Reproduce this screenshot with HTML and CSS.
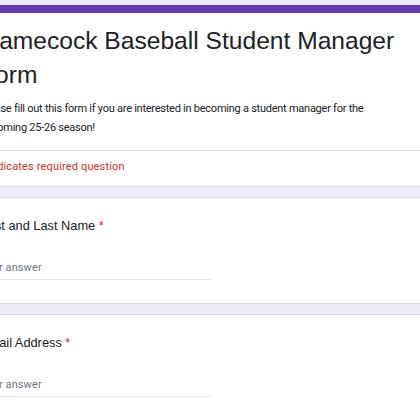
FILE: index.html
```html
<!DOCTYPE html>
<html>
<head>
<meta charset="utf-8">
<link rel="stylesheet" href="styles.css">
</head>
<body>
<div class="page">
  <div class="card header-card">
    <div class="header-main">
      <h1 class="form-title">Gamecock Baseball Student Manager Form</h1>
      <p class="form-desc">Please fill out this form if you are interested in becoming a student manager for the upcoming 25-26 season!</p>
    </div>
    <div class="required-note">* Indicates required question</div>
  </div>
  <div class="card question">
    <div class="q-title">First and Last Name <span class="star">*</span></div>
    <div class="answer">Your answer</div>
  </div>
  <div class="card question">
    <div class="q-title">Email Address <span class="star">*</span></div>
    <div class="answer">Your answer</div>
  </div>
</div>
</body>
</html>
```

FILE: styles.css
```css
html, body {
  margin: 0;
  padding: 0;
  background: #f0ebf8;
  overflow: hidden;
  width: 420px;
  height: 420px;
}
.page {
  margin-left: -45px;
  width: 520px;
  padding-top: 5px;
  display: flex;
  flex-direction: column;
  gap: 10px;
}
.card {
  background: #fff;
  border: 1px solid #dadce0;
  border-radius: 8px;
}
.header-card {
  border-top: 8px solid #673ab7;
  display: flex;
  flex-direction: column;
}
.header-main {
  padding: 11px 24px 13px 24px;
  border-bottom: 1px solid #dadce0;
}
.form-title {
  margin: 0;
  font-family: "Liberation Sans", Arial, sans-serif;
  font-weight: 400;
  font-size: 24.6px;
  line-height: 34px;
  color: #202124;
  width: 440px;
}
.form-desc {
  margin: 7px 0 0 0;
  font-family: Roboto, "Liberation Sans", sans-serif;
  font-size: 11px;
  line-height: 19px;
  letter-spacing: -0.25px;
  color: #202124;
  width: 420px;
}
.required-note {
  padding: 8px 24px 11px 24px;
  font-family: Roboto, "Liberation Sans", sans-serif;
  font-size: 11px;
  line-height: 16px;
  letter-spacing: 0.15px;
  color: #d93025;
}
.question {
  padding: 18px 24px 23px 24px;
  display: flex;
  flex-direction: column;
  gap: 24px;
}
.q-title {
  font-family: "Liberation Sans", Arial, sans-serif;
  font-size: 12.8px;
  line-height: 20px;
  color: #202124;
}
.star {
  color: #d93025;
}
.answer {
  width: 231px;
  font-family: Roboto, "Liberation Sans", sans-serif;
  font-size: 11px;
  line-height: 16px;
  letter-spacing: 0.1px;
  color: #70757a;
  padding-bottom: 3px;
  border-bottom: 1px solid #e0e0e0;
}
```
